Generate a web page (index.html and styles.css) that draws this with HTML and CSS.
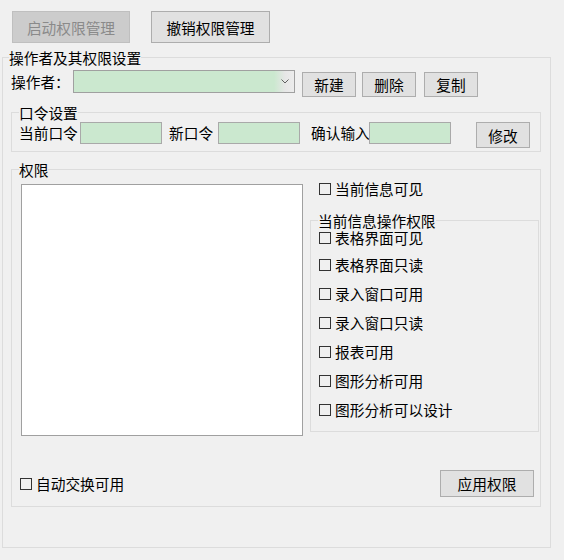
FILE: index.html
```html
<!DOCTYPE html>
<html lang="zh-CN">
<head>
<meta charset="utf-8">
<title>权限管理</title>
<link rel="stylesheet" href="styles.css">
</head>
<body>
<div class="toolbar">
  <button class="btn btn-top btn-disabled">启动权限管理</button>
  <button class="btn btn-top btn-top2">撤销权限管理</button>
</div>
<fieldset class="group outer">
  <legend>操作者及其权限设置</legend>
  <div class="op-row">
    <span class="op-label">操作者：</span>
    <div class="combo">
      <span class="combo-arrow"><svg width="8" height="5" viewBox="0 0 8 5"><path d="M0.5 0.5 L4 4 L7.5 0.5" fill="none" stroke="#606060" stroke-width="1"/></svg></span>
    </div>
    <button class="btn op-btn op-new">新建</button>
    <button class="btn op-btn op-del">删除</button>
    <button class="btn op-btn op-copy">复制</button>
  </div>
  <fieldset class="group pwd">
    <legend>口令设置</legend>
    <div class="pwd-row">
      <span class="pwd-label lbl-cur">当前口令</span>
      <span class="textbox"></span>
      <span class="pwd-label lbl-new">新口令</span>
      <span class="textbox"></span>
      <span class="pwd-label lbl-confirm">确认输入</span>
      <span class="textbox"></span>
      <button class="btn btn-modify">修改</button>
    </div>
  </fieldset>
  <fieldset class="group perm">
    <legend>权限</legend>
    <div class="perm-main">
      <div class="listbox"></div>
      <div class="perm-side">
        <label class="check side-check"><span class="box"></span>当前信息可见</label>
        <fieldset class="group sub">
          <legend>当前信息操作权限</legend>
          <div class="sub-list">
            <label class="check"><span class="box"></span>表格界面可见</label>
            <label class="check"><span class="box"></span>表格界面只读</label>
            <label class="check"><span class="box"></span>录入窗口可用</label>
            <label class="check"><span class="box"></span>录入窗口只读</label>
            <label class="check"><span class="box"></span>报表可用</label>
            <label class="check"><span class="box"></span>图形分析可用</label>
            <label class="check"><span class="box"></span>图形分析可以设计</label>
          </div>
        </fieldset>
      </div>
    </div>
    <div class="perm-footer">
      <label class="check auto-check"><span class="box"></span>自动交换可用</label>
      <button class="btn btn-apply">应用权限</button>
    </div>
  </fieldset>
</fieldset>
</body>
</html>
```
FILE: styles.css
```css
html, body {
  margin: 0;
  background: #f0f0f0;
}
body {
  font-family: "Noto Sans CJK SC", sans-serif;
  font-size: 14.7px;
  line-height: 15px;
  color: #000;
}
.btn {
  font: inherit;
  line-height: 15px;
  color: #000;
  background: #e1e1e1;
  border: 1px solid #adadad;
  padding: 0;
  margin: 0;
  box-sizing: border-box;
  flex: none;
}
.toolbar {
  display: flex;
  gap: 21px;
  padding: 11px 0 0 12px;
}
.btn-top {
  width: 118px;
  height: 32px;
}
.btn-top2 {
  width: 119px;
}
.btn-disabled {
  background: #cccccc;
  border-color: #bfbfbf;
  color: #8a8a8a;
}
.group {
  margin: 0;
  padding: 0;
  border: 1px solid #dcdcdc;
  min-width: 0;
  box-sizing: border-box;
}
.group > legend {
  padding: 0;
  height: 15px;
  line-height: 15px;
}
.outer {
  margin: 7px 0 0 2px;
  width: 549px;
  padding: 0 0 40px 6px;
}
.op-row {
  display: flex;
  align-items: flex-start;
  margin: 5px 0 0 2px;
  height: 27px;
}
.op-label {
  width: 62px;
  line-height: 23px;
  flex: none;
}
.combo {
  width: 222px;
  height: 23px;
  box-sizing: border-box;
  border: 1px solid #a0a0a0;
  background: #cbe8cf;
  display: flex;
  justify-content: flex-end;
  flex: none;
}
.combo-arrow {
  width: 20px;
  background: linear-gradient(to right, #cbe8cf, #e6e6e6 55%, #ececec);
  display: flex;
  align-items: center;
  justify-content: center;
  padding-left: 2px;
  box-sizing: border-box;
}
.op-btn {
  width: 54px;
  height: 25px;
  margin-top: 2px;
}
.op-new { margin-left: 7px; }
.op-del { margin-left: 6px; }
.op-copy { margin-left: 8px; }
.pwd {
  margin: 8px 0 0 2px;
  width: 530px;
  padding: 2px 0 3px 7px;
}
.pwd-row {
  display: flex;
  align-items: flex-start;
  height: 26px;
}
.pwd-label {
  line-height: 22px;
  white-space: nowrap;
  flex: none;
}
.lbl-cur { width: 61px; }
.lbl-new { width: 49px; margin-left: 7px; }
.lbl-confirm { width: 58px; margin-left: 11px; }
.textbox {
  width: 82px;
  height: 22px;
  box-sizing: border-box;
  border: 1px solid #a9a9a9;
  background: #cbe8cf;
  flex: none;
}
.btn-modify {
  width: 54px;
  height: 26px;
  margin-left: 25px;
}
.perm {
  margin: 10px 0 0 2px;
  width: 530px;
  padding: 0 1px 9px 7px;
}
.perm-main {
  display: flex;
  align-items: flex-start;
}
.listbox {
  margin: 7px 0 0 2px;
  width: 282px;
  height: 252px;
  box-sizing: border-box;
  border: 1px solid #a0a0a0;
  background: #fff;
  flex: none;
}
.perm-side {
  margin-left: 7px;
  flex: none;
}
.check {
  display: flex;
  align-items: center;
  gap: 4px;
  height: 15px;
  white-space: nowrap;
}
.box {
  width: 12px;
  height: 12px;
  box-sizing: border-box;
  border: 1px solid #333;
  flex: none;
}
.side-check {
  margin: 4px 0 0 9px;
}
.sub {
  margin-top: 17px;
  width: 229px;
  padding: 2px 0 14px 7px;
}
.sub-list {
  display: flex;
  flex-direction: column;
  gap: 14px;
  margin-left: 1px;
}
.sub-list .check:first-child {
  margin-bottom: -2px;
}
.perm-footer {
  display: flex;
  justify-content: space-between;
  align-items: center;
  margin-top: 34px;
  height: 27px;
}
.auto-check {
  margin-left: 1px;
}
.btn-apply {
  width: 94px;
  height: 27px;
  margin-right: 5px;
}
```
